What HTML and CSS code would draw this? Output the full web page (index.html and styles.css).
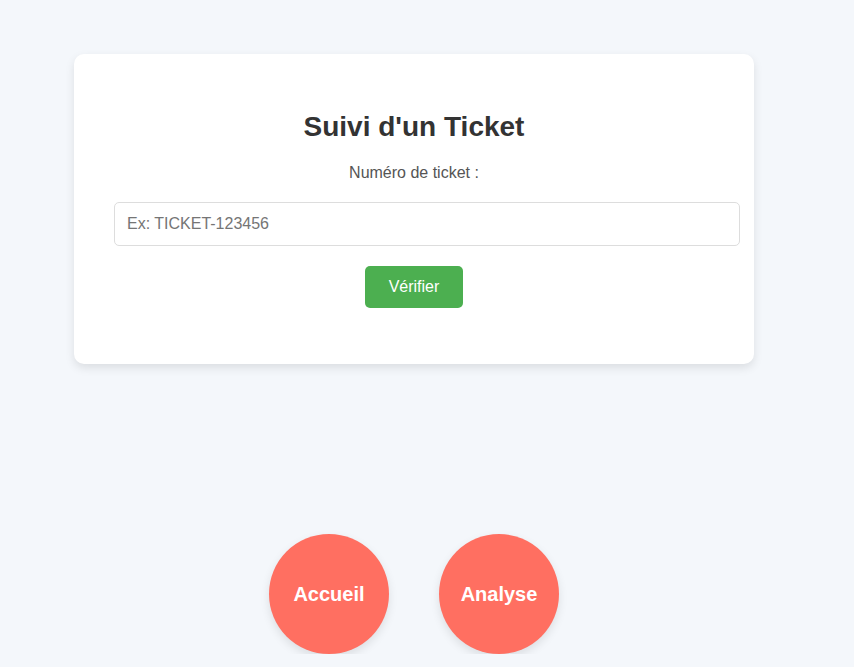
FILE: index.html
```html
<!DOCTYPE html>
<html lang="fr">
<head>
<meta charset="utf-8">
<title>Suivi d'un Ticket</title>
<link rel="stylesheet" href="styles.css">
</head>
<body>
<div class="page">
  <div class="card">
    <h2 class="title">Suivi d'un Ticket</h2>
    <label class="label" for="ticket">Numéro de ticket :</label>
    <input class="input" id="ticket" type="text" placeholder="Ex: TICKET-123456">
    <button class="btn">Vérifier</button>
  </div>
  <div class="nav">
    <a class="circle" href="#">Accueil</a>
    <a class="circle" href="#">Analyse</a>
  </div>
</div>
</body>
</html>
```
FILE: styles.css
```css
html, body {
  margin: 0;
  padding: 0;
  background: #f4f7fb;
  font-family: "Liberation Sans", Arial, sans-serif;
  overflow: hidden;
}
.page {
  width: 828px;
  display: flex;
  flex-direction: column;
  align-items: center;
  padding-top: 54px;
}
.card {
  width: 600px;
  background: #fff;
  border-radius: 10px;
  padding: 40px 40px 56px;
  box-shadow: 0 4px 10px rgba(0, 0, 0, 0.1);
  display: flex;
  flex-direction: column;
  align-items: center;
}
.title {
  margin: 17px 0 21px;
  font-size: 28px;
  line-height: 32px;
  font-weight: bold;
  color: #333;
}
.label {
  font-size: 16px;
  line-height: 18px;
  color: #555;
  margin-bottom: 20px;
}
.input {
  align-self: flex-start;
  width: 600px;
  padding: 12px;
  font-size: 16px;
  line-height: 18px;
  height: 18px;
  border: 1px solid #ddd;
  border-radius: 5px;
  font-family: "Liberation Sans", Arial, sans-serif;
  color: #333;
  outline: none;
  margin: 0 0 20px;
}
.input::placeholder {
  color: #757575;
}
.btn {
  background: #4caf50;
  color: #fff;
  border: none;
  border-radius: 5px;
  padding: 12px 24px;
  font-size: 16px;
  line-height: 18px;
  font-family: "Liberation Sans", Arial, sans-serif;
  cursor: pointer;
}
.nav {
  display: flex;
  gap: 50px;
  margin-top: 170px;
}
.circle {
  width: 120px;
  height: 120px;
  border-radius: 50%;
  background: #ff6f61;
  color: #fff;
  font-weight: bold;
  font-size: 20px;
  text-decoration: none;
  display: flex;
  align-items: center;
  justify-content: center;
  box-shadow: 0 4px 10px rgba(0, 0, 0, 0.1);
}
```
